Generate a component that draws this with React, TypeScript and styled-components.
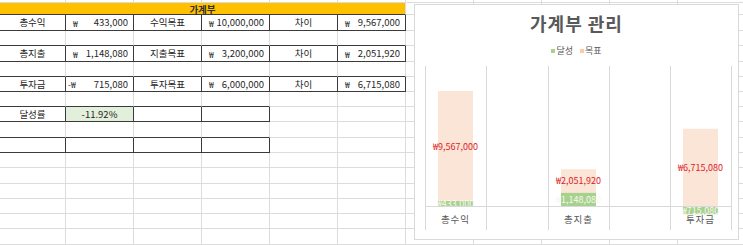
import React from "react";
import styled, { createGlobalStyle } from "styled-components";

const GlobalStyle = createGlobalStyle`
  html, body { margin: 0; padding: 0; background: #ffffff; overflow: hidden; }
  body { font-family: "Noto Sans CJK KR", "Noto Sans", sans-serif; }
`;

const COLS = [66, 68, 68, 68, 68, 68, 68, 68, 68, 68, 68];

type CellDef = {
  text?: string;
  kind?: "center" | "acct";
  cur?: string;
  fill?: string;
};
type RowDef = { h: number; boxCols?: number; header?: string; cells?: CellDef[] };

const acct = (cur: string, text: string): CellDef => ({ kind: "acct", cur, text });
const ctr = (text: string, fill?: string): CellDef => ({ kind: "center", text, fill });

const ROWS: RowDef[] = [
  { h: 3 },
  { h: 12, header: "가계부" },
  {
    h: 16,
    boxCols: 6,
    cells: [ctr("총수익"), acct("₩", "433,000"), ctr("수익목표"), acct("₩", "10,000,000"), ctr("차이"), acct("₩", "9,567,000")],
  },
  { h: 15 },
  {
    h: 16,
    boxCols: 6,
    cells: [ctr("총지출"), acct("₩", "1,148,080"), ctr("지출목표"), acct("₩", "3,200,000"), ctr("차이"), acct("₩", "2,051,920")],
  },
  { h: 15 },
  {
    h: 15,
    boxCols: 6,
    cells: [ctr("투자금"), acct("-₩", "715,080"), ctr("투자목표"), acct("₩", "6,000,000"), ctr("차이"), acct("₩", "6,715,080")],
  },
  { h: 15 },
  { h: 15, boxCols: 4, cells: [ctr("달성률"), ctr("-11.92%", "#e2efda"), ctr(""), ctr("")] },
  { h: 16 },
  { h: 15, boxCols: 4, cells: [ctr(""), ctr(""), ctr(""), ctr("")] },
  { h: 15 },
  { h: 16 },
  { h: 15 },
  { h: 15 },
  { h: 15 },
  { h: 16 },
];

const DARK = "#3a3a3a";
const LIGHT = "#dcdcdc";

const Page = styled.div`
  position: relative;
  width: 743px;
  height: 245px;
  overflow: hidden;
`;

const Sheet = styled.div<{ $cols: string; $rows: string }>`
  display: grid;
  grid-template-columns: ${(p) => p.$cols};
  grid-template-rows: ${(p) => p.$rows};
`;

const Cell = styled.div<{
  $darkR: boolean;
  $darkB: boolean;
  $fill?: string;
  $span?: number;
  $kind?: "center" | "acct";
  $neg?: boolean;
}>`
  box-sizing: border-box;
  grid-column: span ${(p) => p.$span ?? 1};
  border-right: 1px solid ${(p) => (p.$darkR ? DARK : LIGHT)};
  border-bottom: 1px solid ${(p) => (p.$darkB ? DARK : LIGHT)};
  background: ${(p) => p.$fill ?? "#ffffff"};
  display: flex;
  align-items: center;
  justify-content: ${(p) => (p.$kind === "acct" ? "space-between" : "center")};
  padding: ${(p) => (p.$kind === "acct" ? `1px 5px 0 ${p.$neg ? 2 : 7}px` : "1px 0 0 0")};
  font-size: 9.5px;
  line-height: 1;
  color: #262626;
  white-space: nowrap;
  overflow: hidden;
`;

const HeaderCell = styled(Cell)`
  background: #ffc000;
  font-weight: 700;
  font-size: 9.5px;
  line-height: 10px;
  color: #303030;
  padding: 0;
  overflow: visible;
`;

const Cur = styled.span`
  font-size: 8.5px;
`;

const Num = styled.span``;

/* ---------- chart ---------- */

const ChartBox = styled.div`
  position: absolute;
  left: 414px;
  top: 4px;
  width: 325px;
  height: 236px;
  box-sizing: border-box;
  border: 1px solid #d9d9d9;
  background: #ffffff;
  display: flex;
  flex-direction: column;
  align-items: center;
`;

const ChartTitle = styled.div`
  margin-top: 7px;
  font-size: 18px;
  font-weight: 700;
  line-height: 22px;
  letter-spacing: 1px;
  color: #595959;
`;

const Legend = styled.div`
  margin-top: 11px;
  display: flex;
  gap: 7px;
  font-size: 9px;
  line-height: 12px;
  color: #595959;
`;

const LegendItem = styled.div`
  display: flex;
  align-items: center;
  gap: 1px;
`;

const Swatch = styled.span<{ $color: string }>`
  width: 4px;
  height: 4px;
  background: ${(p) => p.$color};
`;

const Plot = styled.svg`
  display: block;
  flex: none;
`;

const GREEN = "#a9d18e";
const PEACH = "#fbe5d6";
const RED = "#de2227";

const AXIS_Y = 149;
const SCALE = 115 / 10000000;

const BARS = [
  { name: "총수익", x: 23, done: 433000, diff: 9567000, doneLabel: "₩433,000", diffLabel: "₩9,567,000" },
  { name: "총지출", x: 146, done: 1148080, diff: 2051920, doneLabel: "₩1,148,080", diffLabel: "₩2,051,920" },
  { name: "투자금", x: 268, done: -715080, diff: 6715080, doneLabel: "₩715,080", diffLabel: "₩6,715,080" },
];

const GRID_X = [10, 71, 133, 194, 255, 316];
const BAR_W = 35;

function Chart() {
  return (
    <ChartBox>
      <ChartTitle>가계부 관리</ChartTitle>
      <Legend>
        <LegendItem>
          <Swatch $color={GREEN} />
          달성
        </LegendItem>
        <LegendItem>
          <Swatch $color="#f8cbad" />
          목표
        </LegendItem>
      </Legend>
      <Plot width={323} height={182} viewBox="0 0 323 182">
        {GRID_X.map((x) => (
          <line key={x} x1={x + 0.5} x2={x + 0.5} y1={9} y2={173} stroke="#d9d9d9" strokeWidth={1} />
        ))}
        {BARS.map((b) => {
          const doneH = Math.abs(b.done) * SCALE;
          const doneTop = b.done >= 0 ? AXIS_Y - doneH : AXIS_Y;
          const posBase = b.done >= 0 ? AXIS_Y - doneH : AXIS_Y;
          const diffH = b.diff * SCALE;
          const diffTop = posBase - diffH;
          const cx = b.x + BAR_W / 2;
          return (
            <g key={b.name}>
              <rect x={b.x} y={diffTop} width={BAR_W} height={diffH} fill={PEACH} />
              <rect x={b.x} y={doneTop} width={BAR_W} height={doneH} fill={GREEN} />
              <text
                x={cx}
                y={diffTop + diffH / 2}
                textAnchor="middle"
                dominantBaseline="central"
                fontSize={9}
                fill={RED}
                fontFamily='"Noto Sans CJK KR", sans-serif'
              >
                {b.diffLabel}
              </text>
              <text
                x={cx}
                y={doneTop + doneH / 2}
                textAnchor="middle"
                dominantBaseline="central"
                fontSize={9}
                fill="#f4f9f0"
                fontFamily='"Noto Sans CJK KR", sans-serif'
              >
                {b.doneLabel}
              </text>
              <text
                x={cx}
                y={162}
                textAnchor="middle"
                dominantBaseline="central"
                fontSize={9.5}
                fill="#595959"
                letterSpacing={1}
                fontFamily='"Noto Sans CJK KR", sans-serif'
              >
                {b.name}
              </text>
            </g>
          );
        })}
        <line x1={10} x2={317} y1={AXIS_Y + 0.5} y2={AXIS_Y + 0.5} stroke="#d9d9d9" strokeWidth={1} />
      </Plot>
    </ChartBox>
  );
}

function isBoxed(r: number, c: number) {
  const row = ROWS[r];
  return !!row && (row.boxCols ?? 0) > c;
}

export default function App() {
  const cells: React.ReactNode[] = [];
  ROWS.forEach((row, r) => {
    let c = 0;
    if (row.header) {
      const end = 5;
      let darkB = false;
      for (let k = 0; k <= end; k++) if (isBoxed(r + 1, k)) darkB = true;
      cells.push(
        <HeaderCell key={`h${r}`} $span={6} $darkR={false} $darkB={darkB}>
          {row.header}
        </HeaderCell>
      );
      c = 6;
    }
    for (; c < COLS.length; c++) {
      const def = row.cells?.[c];
      const darkR = isBoxed(r, c) || isBoxed(r, c + 1);
      const darkB = isBoxed(r, c) || isBoxed(r + 1, c);
      if (def && def.kind === "acct") {
        cells.push(
          <Cell key={`${r}-${c}`} $kind="acct" $neg={def.cur?.startsWith("-")} $darkR={darkR} $darkB={darkB}>
            <Cur>{def.cur}</Cur>
            <Num>{def.text}</Num>
          </Cell>
        );
      } else {
        cells.push(
          <Cell key={`${r}-${c}`} $kind="center" $fill={def?.fill} $darkR={darkR} $darkB={darkB}>
            {def?.text}
          </Cell>
        );
      }
    }
  });

  return (
    <Page>
      <GlobalStyle />
      <Sheet $cols={COLS.map((w) => `${w}px`).join(" ")} $rows={ROWS.map((r) => `${r.h}px`).join(" ")}>
        {cells}
      </Sheet>
      <Chart />
    </Page>
  );
}
